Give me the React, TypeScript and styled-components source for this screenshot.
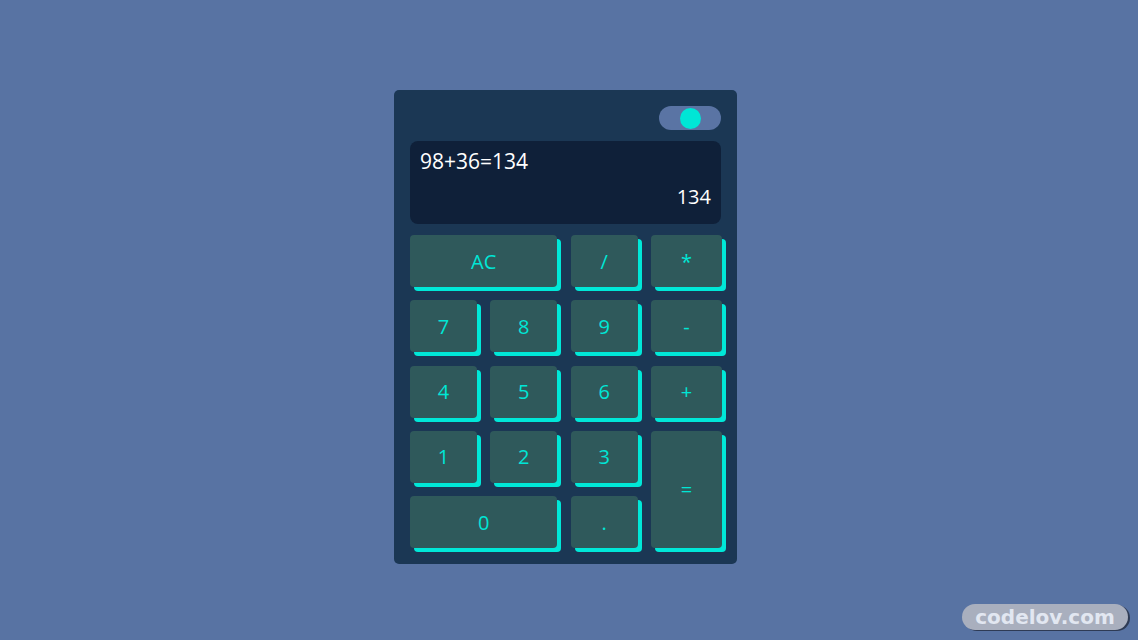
import React from "react";
import styled, { createGlobalStyle } from "styled-components";

const Global = createGlobalStyle`
  html, body { margin: 0; padding: 0; }
  body {
    background: #5873a3;
    font-family: "Open Sans", "Noto Sans", sans-serif;
    overflow: hidden;
  }
`;

const Page = styled.div`
  min-height: 100vh;
  box-sizing: border-box;
  display: flex;
  justify-content: center;
  align-items: flex-start;
  padding: 90px 7px 0 0;
`;

const Card = styled.div`
  width: 343px;
  box-sizing: border-box;
  padding: 16px;
  background: #1b3754;
  border-radius: 5px;
  display: flex;
  flex-direction: column;
  gap: 11px;
`;

const TopBar = styled.div`
  display: flex;
  justify-content: flex-end;
`;

const Toggle = styled.div`
  width: 62px;
  height: 24px;
  border-radius: 12px;
  background: #5a74a4;
  display: flex;
  align-items: center;
  justify-content: center;
`;

const Knob = styled.div`
  width: 21px;
  height: 21px;
  border-radius: 50%;
  background: #00e6d6;
`;

const Display = styled.div`
  height: 83px;
  box-sizing: border-box;
  background: #0f2039;
  border-radius: 8px;
  padding: 6px 10px 0 10px;
  color: #ffffff;
  display: flex;
  flex-direction: column;
`;

const Expr = styled.div`
  font-size: 21px;
  line-height: 28px;
`;

const Result = styled.div`
  font-size: 20px;
  line-height: 28px;
  text-align: right;
  margin-top: 8px;
`;

const Keys = styled.div`
  display: grid;
  grid-template-columns: 67px 67px 67px 71px;
  grid-auto-rows: 52px;
  column-gap: 13.33px;
  row-gap: 13.25px;
`;

const Key = styled.button<{ $cols?: number; $rows?: number }>`
  grid-column: span ${(p) => p.$cols ?? 1};
  grid-row: span ${(p) => p.$rows ?? 1};
  border: none;
  margin: 0;
  padding: 0;
  background: #2f595b;
  color: #00e6d6;
  border-radius: 4px;
  box-shadow: 4px 4px 0 #00e8d8;
  font-family: "Open Sans", "Noto Sans", sans-serif;
  font-size: 20px;
  display: flex;
  align-items: center;
  justify-content: center;
  cursor: pointer;
`;

const Watermark = styled.div`
  position: absolute;
  right: 10px;
  bottom: 10px;
  width: 166px;
  height: 26px;
  border-radius: 13px;
  background: #a9afbe;
  box-shadow: 2px 1px 0 #2e3b55;
  color: #e2e7f1;
  font-family: "DejaVu Sans", Verdana, sans-serif;
  font-weight: bold;
  font-size: 20px;
  line-height: 26px;
  text-align: center;
`;

export default function App() {
  return (
    <>
      <Global />
      <Page>
        <Card>
          <TopBar>
            <Toggle>
              <Knob />
            </Toggle>
          </TopBar>
          <Display>
            <Expr>98+36=134</Expr>
            <Result>134</Result>
          </Display>
          <Keys>
            <Key $cols={2}>AC</Key>
            <Key>/</Key>
            <Key>*</Key>
            <Key>7</Key>
            <Key>8</Key>
            <Key>9</Key>
            <Key>-</Key>
            <Key>4</Key>
            <Key>5</Key>
            <Key>6</Key>
            <Key>+</Key>
            <Key>1</Key>
            <Key>2</Key>
            <Key>3</Key>
            <Key $rows={2}>=</Key>
            <Key $cols={2}>0</Key>
            <Key>.</Key>
          </Keys>
        </Card>
      </Page>
      <Watermark>codelov.com</Watermark>
    </>
  );
}
